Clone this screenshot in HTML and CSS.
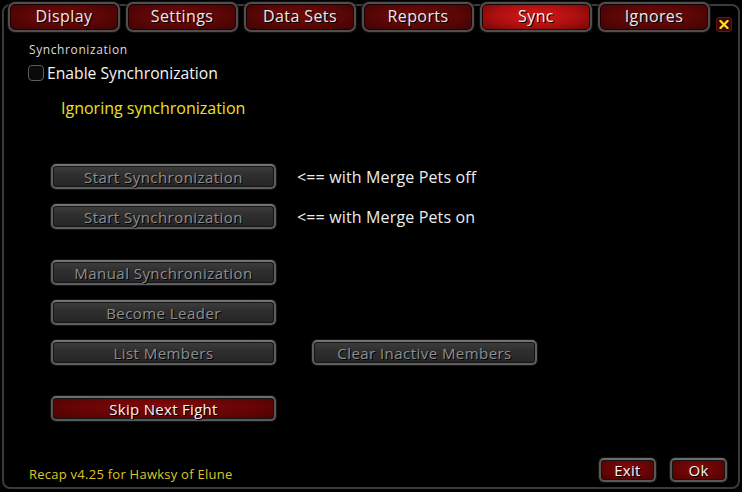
FILE: index.html
```html
<!DOCTYPE html>
<html>
<head>
<meta charset="utf-8">
<title>Recap - Sync</title>
<link rel="stylesheet" href="styles.css">
</head>
<body>
<div class="frame">
  <nav class="tabs">
    <div class="tab">Display</div>
    <div class="tab">Settings</div>
    <div class="tab">Data Sets</div>
    <div class="tab">Reports</div>
    <div class="tab active">Sync</div>
    <div class="tab">Ignores</div>
    <div class="close">
      <svg width="10" height="9" viewBox="0 0 10 9"><path d="M1.5 1 L8.5 8 M8.5 1 L1.5 8" stroke="#ffe21a" stroke-width="2.2" stroke-linecap="square"/></svg>
    </div>
  </nav>
  <main class="content">
    <div class="section-label">Synchronization</div>
    <div class="check-row"><span class="checkbox"></span><span class="check-text">Enable Synchronization</span></div>
    <div class="status">Ignoring synchronization</div>
    <div class="actions">
      <div class="row"><button class="btn" disabled>Start Synchronization</button><span class="note">&lt;== with Merge Pets off</span></div>
      <div class="row"><button class="btn" disabled>Start Synchronization</button><span class="note">&lt;== with Merge Pets on</span></div>
      <div class="row group"><button class="btn" disabled>Manual Synchronization</button></div>
      <div class="row"><button class="btn" disabled>Become Leader</button></div>
      <div class="row"><button class="btn" disabled>List Members</button><button class="btn side" disabled>Clear Inactive Members</button></div>
      <div class="row group"><button class="btn red">Skip Next Fight</button></div>
    </div>
  </main>
  <footer class="footer">
    <span class="version">Recap v4.25 for Hawksy of Elune</span>
    <div class="footer-btns">
      <button class="btn red small">Exit</button>
      <button class="btn red small">Ok</button>
    </div>
  </footer>
</div>
</body>
</html>
```
FILE: styles.css
```css
* { box-sizing: border-box; }
html, body { margin: 0; padding: 0; background: #000; }
body {
  width: 742px;
  height: 492px;
  overflow: hidden;
  font-family: "Open Sans", "DejaVu Sans", sans-serif;
}
.frame {
  margin: 4px 2px 3px 2px;
  height: 485px;
  border: 2px solid #3a3a3a;
  border-radius: 8px;
  display: flex;
  flex-direction: column;
  background: #000;
}
.tabs {
  display: flex;
  align-items: flex-start;
  gap: 6px;
  margin-top: -4px;
  padding-left: 4px;
  height: 30px;
}
.tab {
  width: 112px;
  height: 30px;
  border: 2px solid #4f4f4f;
  border-radius: 7px;
  box-shadow: 0 0 0 1px #111, inset 0 0 0 1px #1c0000;
  background: radial-gradient(ellipse at 50% 45%, #700909 0%, #5a0606 55%, #3c0303 100%);
  color: #e8e8e8;
  font-size: 16px;
  letter-spacing: 0.4px;
  line-height: 24px;
  text-align: center;
  text-shadow: 1px 1px 0 #000;
}
.tab.active {
  background: radial-gradient(ellipse at 50% 45%, #d81818 0%, #b01010 50%, #6e0606 100%);
  color: #f2f2f2;
}
.close {
  margin-top: 15px;
  width: 16px;
  height: 15px;
  border-radius: 3px;
  background: #3c0707;
  border: 1px solid #5a1a1a;
  display: flex;
  align-items: center;
  justify-content: center;
}
.content {
  padding-left: 25px;
  display: flex;
  flex-direction: column;
}
.section-label {
  margin-top: 11px;
  font-size: 12px;
  letter-spacing: 0.6px;
  line-height: 13px;
  color: #dcdcdc;
}
.check-row {
  margin-top: 8px;
  height: 18px;
  display: flex;
  align-items: center;
  gap: 3px;
}
.checkbox {
  width: 16px;
  height: 16px;
  border: 1px solid #5c5c5c;
  border-radius: 4px;
  background: #0a0a0a;
  margin-left: -1px;
}
.check-text {
  color: #f4f4f4;
  font-size: 15.7px;
  line-height: 18px;
}
.status {
  margin-top: 16px;
  padding-left: 32px;
  color: #ece022;
  font-size: 16px;
  line-height: 20px;
}
.actions {
  margin-top: 46px;
  padding-left: 22px;
  display: flex;
  flex-direction: column;
  gap: 15px;
}
.row {
  display: flex;
  align-items: center;
  height: 25px;
}
.row.group { margin-top: 16px; }
.btn {
  width: 225px;
  height: 25px;
  padding: 0;
  border: 2px solid #5e5e5e;
  border-top-color: #727272;
  border-radius: 5px;
  box-shadow: 0 0 0 1px #161616, inset 0 0 0 1px #141414;
  background: linear-gradient(#3d3d3d 0%, #2e2e2e 45%, #262626 100%);
  color: #8e8e8e;
  font-family: "Open Sans", "DejaVu Sans", sans-serif;
  font-size: 15px;
  letter-spacing: 0.45px;
  line-height: 20px;
  text-shadow: 1px 1px 0 #000;
  text-align: center;
}
.btn.side { margin-left: 36px; }
.btn.red {
  background: radial-gradient(ellipse at 50% 40%, #840808 0%, #640404 60%, #4a0202 100%);
  color: #f4f4f4;
  border-color: #585858;
  border-top-color: #6c6c6c;
  letter-spacing: 0.3px;
}
.note {
  margin-left: 21px;
  color: #ececec;
  font-size: 16px;
  letter-spacing: 0.15px;
  line-height: 20px;
}
.footer {
  margin-top: auto;
  display: flex;
  align-items: flex-end;
  justify-content: space-between;
  padding: 0 11px 5px 25px;
}
.version {
  color: #dcc626;
  font-size: 13px;
  letter-spacing: 0.25px;
  line-height: 16px;
  margin-bottom: 0;
}
.footer-btns {
  display: flex;
  gap: 14px;
}
.btn.small {
  width: 57px;
  height: 24px;
  font-size: 15px;
  line-height: 19px;
}
```
